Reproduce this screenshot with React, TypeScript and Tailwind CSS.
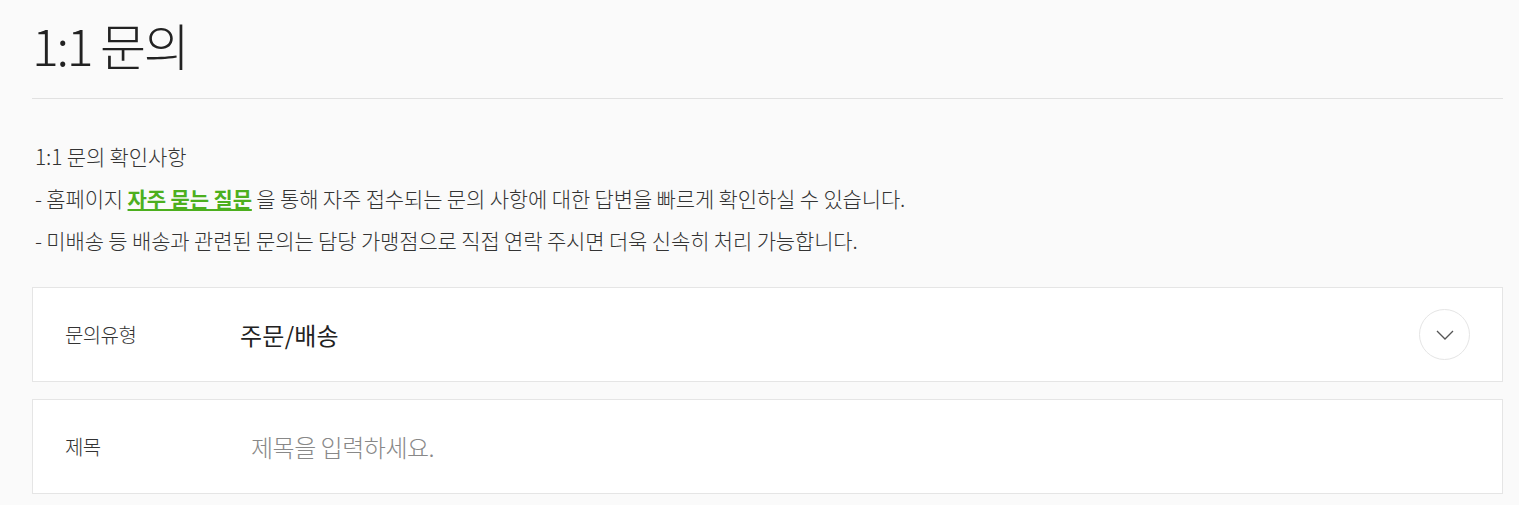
import React from 'react';

const font = { fontFamily: '"Noto Sans CJK KR", "Noto Sans", sans-serif' };

const App: React.FC = () => {
  return (
    <div className="min-h-[505px] bg-[#fafafa] pl-8 pr-4 text-[#222]" style={font}>
      <h1 className="pt-[14px] pb-[24px] text-[50px] leading-[60px] font-light tracking-[-0.045em] border-b border-[#e1e1e1]">
        1:1 문의
      </h1>

      <div className="pt-[44px] pl-[3px] text-[21px] font-light tracking-[-0.007em] text-[#333]">
        <p className="leading-[26px]">1:1 문의 확인사항</p>
        <p className="mt-[16px] leading-[26px]">
          - 홈페이지{' '}
          <a href="#" className="font-bold text-[#4caf1e] underline underline-offset-2">
            자주 묻는 질문
          </a>{' '}
          을 통해 자주 접수되는 문의 사항에 대한 답변을 빠르게 확인하실 수 있습니다.
        </p>
        <p className="mt-[16px] leading-[26px]">
          - 미배송 등 배송과 관련된 문의는 담당 가맹점으로 직접 연락 주시면 더욱 신속히 처리 가능합니다.
        </p>
      </div>

      <div className="mt-[34px] flex flex-col gap-[17px]">
        <div className="flex h-[95px] items-center border border-[#e5e5e5] bg-white pl-8 pr-8">
          <span className="w-[175px] text-[20px] font-light tracking-[-0.03em] text-[#333]">문의유형</span>
          <span className="flex-1 text-[24px] tracking-[0.01em] text-[#222]">주문/배송</span>
          <button className="flex h-[51px] w-[51px] items-center justify-center rounded-full border border-[#e5e5e5] bg-white">
            <svg width="20" height="12" viewBox="0 0 20 12" fill="none">
              <path d="M2 2l8 8 8-8" stroke="#555" strokeWidth="1.3" />
            </svg>
          </button>
        </div>
        <div className="flex h-[95px] items-center border border-[#e5e5e5] bg-white pl-8 pr-8">
          <span className="w-[175px] text-[20px] font-light tracking-[-0.03em] text-[#333]">제목</span>
          <input
            className="flex-1 bg-transparent pl-[11px] text-[24px] font-light tracking-[-0.02em] text-[#222] outline-none placeholder:text-[#888]"
            placeholder="제목을 입력하세요."
          />
        </div>
      </div>
    </div>
  );
};

export default App;
